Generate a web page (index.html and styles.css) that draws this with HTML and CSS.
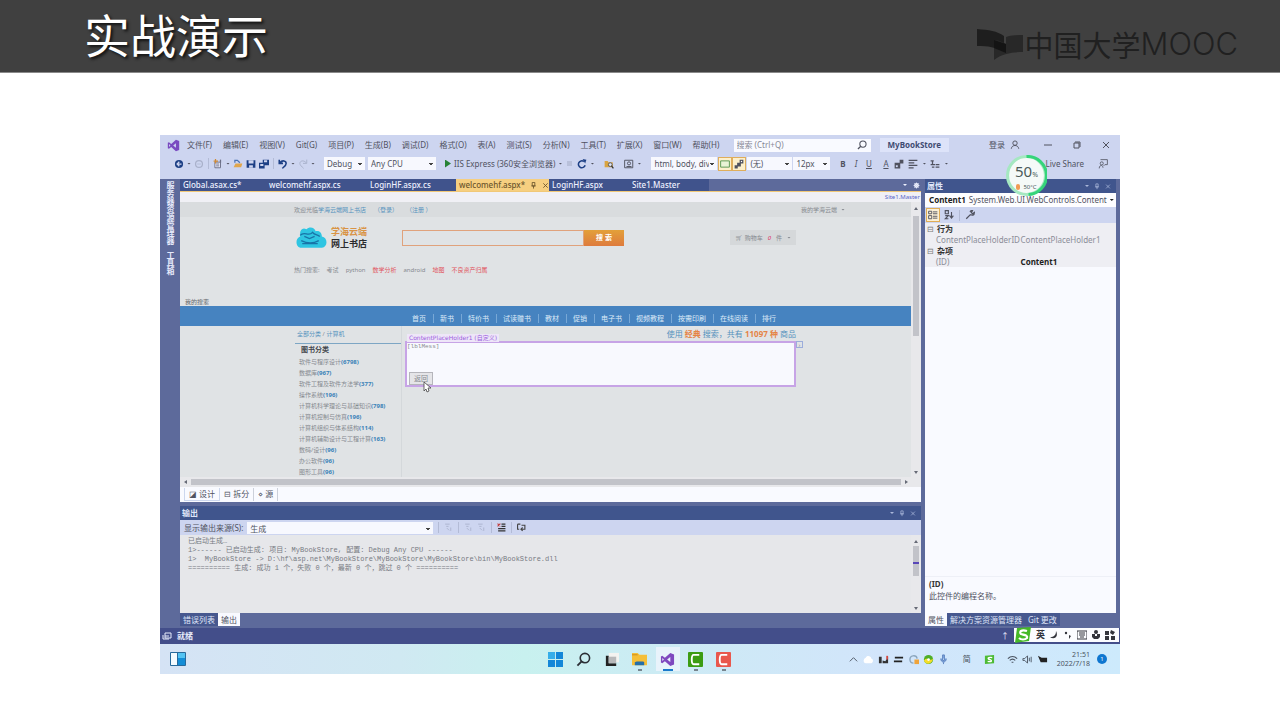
FILE: index.html
```html
<!DOCTYPE html>
<html lang="zh-CN">
<head>
    <meta charset="UTF-8">
    <meta name="viewport" content="width=device-width, initial-scale=1.0">
    <title>实战演示</title>
    <link rel="stylesheet" href="styles.css">
</head>
<body>
    <!-- ICON SHAPES -->
    <svg class="defs" aria-hidden="true">
        <symbol id="vs" viewBox="0 0 16 16"><path fill-rule="evenodd" d="M11 1l4 1.6v10.8L11 15 5.200 9.800 2.400 12 1 11.300V4.700L2.400 4l2.800 2.200zM11 5.300L7.600 8 11 10.700zM2.500 6.300v3.400L4.200 8z"/></symbol>
        <symbol id="search" viewBox="0 0 16 16"><circle cx="9.500" cy="6.500" r="5" fill="none" stroke="currentColor" stroke-width="1.700"/><path d="M6 10l-4.500 4.500" stroke="currentColor" stroke-width="2"/></symbol>
        <symbol id="back" viewBox="0 0 16 16"><circle cx="8" cy="8" r="6.500"/><path d="M8.500 4.500L5 8l3.500 3.500M5 8h7" fill="none" stroke="#cdd5f0" stroke-width="2"/></symbol>
        <symbol id="ring" viewBox="0 0 16 16"><circle cx="8" cy="8" r="5.500" fill="none" stroke="currentColor" stroke-width="2"/><path d="M5 8h6" stroke="currentColor"/></symbol>
        <symbol id="new" viewBox="0 0 16 16"><path d="M3 5h9v9H3zM5 8h5M5 11h5" fill="#eef" stroke="#6b6f86" stroke-width="1.500"/><path d="M4 0v7M1 3.500h7" stroke="#d08a35" stroke-width="2"/><path d="M12 1v5" stroke="#6b6f86" stroke-width="2"/></symbol>
        <symbol id="open" viewBox="0 0 16 16"><path d="M1 13l3-6h11l-2 6z" fill="#e0a64c"/><path d="M3 6V2h4l4 4" fill="none" stroke="#4a73b5" stroke-width="2"/></symbol>
        <symbol id="save" viewBox="0 0 16 16"><path d="M1 2h14v12H1z"/><path d="M4 2h8v5H4zM5 10h6v4H5z" fill="#cdd5f0"/></symbol>
        <symbol id="saveall" viewBox="0 0 16 16"><path d="M6 1h10v9H6zM0 6h9v9H0z"/><path d="M8 2h5v3H8zM2 8h5v3H2z" fill="#cdd5f0"/></symbol>
        <symbol id="undo" viewBox="0 0 16 16"><path d="M2 1v6h6M3 6c4-5 10-3 10 1 0 3-3 5-6 8" fill="none" stroke="currentColor" stroke-width="2.500"/></symbol>
        <symbol id="redo" viewBox="0 0 16 16"><path d="M14 1v6H8M13 6C9 1 3 3 3 7c0 3 3 5 6 8" fill="none" stroke="currentColor" stroke-width="1.500"/></symbol>
        <symbol id="refresh" viewBox="0 0 16 16"><path d="M13 10a5.500 5.500 0 1 1-2-6" fill="none" stroke="currentColor" stroke-width="2.500"/><path d="M9 0l6 1-2 6z"/></symbol>
        <symbol id="find" viewBox="0 0 16 16"><path d="M1 3h5l1 2h7v8H1z" fill="#d9a441"/><circle cx="10" cy="9" r="3" fill="#dfe4f6" stroke="#555" stroke-width="1.500"/><path d="M12 11l3 4" stroke="#333" stroke-width="2"/></symbol>
        <symbol id="preview" viewBox="0 0 16 16"><path d="M1 2h13v12H1zM4 12h8" fill="none" stroke="currentColor" stroke-width="1.500"/><circle cx="8" cy="7" r="2.500" fill="none" stroke="currentColor" stroke-width="1.500"/></symbol>
        <symbol id="box" viewBox="0 0 16 16"><path d="M1 3h14v10H1z" fill="#e9f3d5" stroke="#5a9650" stroke-width="1.500"/></symbol>
        <symbol id="link" viewBox="0 0 16 16"><path d="M9 1h6v6H9zM5 6h6v6H5zM1 10h5v5H1z"/><path d="M11 3h2v2h-2z" fill="#fff"/></symbol>
        <symbol id="blocks" viewBox="0 0 16 16"><path d="M1 6h9v9H1zM9 1h6v6H9z"/><path d="M3 10h3v3H3z" fill="#cdd5f0"/></symbol>
        <symbol id="lines" viewBox="0 0 16 16"><path d="M1 2h14M1 6h9M1 10h14M1 14h8" stroke="currentColor" stroke-width="2"/></symbol>
        <symbol id="clear" viewBox="0 0 16 16"><path d="M8 2h7M8 6h7M2 10h13M2 14h13" stroke="#333" stroke-width="2"/><path d="M1 1l5 5M6 1L1 6" stroke="#c23b3b" stroke-width="2"/></symbol>
        <symbol id="wrap" viewBox="0 0 16 16"><path d="M1 2h5M1 2v9h3M8 4h6v7H7M10 8l-3 3 3 3" fill="none" stroke="#444" stroke-width="2"/></symbol>
        <symbol id="list" viewBox="0 0 16 16"><path d="M1 3h5M4 3v6M1 9h7M9 9h6M9 13h6M3 13h4" stroke="currentColor" stroke-width="2"/></symbol>
        <symbol id="person" viewBox="0 0 16 16"><circle cx="8" cy="5" r="3.500" fill="none" stroke="currentColor" stroke-width="1.500"/><path d="M2 14c1-7 11-7 12 0" fill="none" stroke="currentColor" stroke-width="1.500"/></symbol>
        <symbol id="share" viewBox="0 0 16 16"><path d="M4 1h11v8h-4l-2 2M2 15c0-6 6-6 6-1" fill="none" stroke="currentColor" stroke-width="1.300"/><circle cx="6" cy="7" r="2.500" fill="none" stroke="currentColor" stroke-width="1.300"/></symbol>
        <symbol id="pin" viewBox="0 0 16 16"><path d="M5 1h6v8H5zM3 9h10M8 9v6" fill="none" stroke="currentColor" stroke-width="2"/></symbol>
        <symbol id="cross" viewBox="0 0 16 16"><path d="M3 3l10 10M13 3L3 13" stroke="currentColor" stroke-width="2"/></symbol>
        <symbol id="gear" viewBox="0 0 16 16"><circle cx="8" cy="8" r="4" fill="none" stroke="currentColor" stroke-width="3"/><path d="M8 1v14M1 8h14M3 3l10 10M13 3L3 13" stroke="currentColor" stroke-width="1.500"/></symbol>
        <symbol id="category" viewBox="0 0 16 16"><path d="M1 2h5v4H1zM1 9h5v5H1zM8 3h7M8 6h7M8 10h7M8 13h7" fill="none" stroke="currentColor" stroke-width="1.500"/></symbol>
        <symbol id="sort" viewBox="0 0 16 16"><path d="M2 1h5v5H2zM2 9h5l-5 5h5M12 3v9M9 9l3 4 3-4" fill="none" stroke="currentColor" stroke-width="1.800"/></symbol>
        <symbol id="wrench" viewBox="0 0 16 16"><path d="M2 14l7-7M8 3c2-3 4-2 4-2L10 4l2 2 3-2c0 5-4 5-6 3" fill="none" stroke="currentColor" stroke-width="2"/></symbol>
        <symbol id="step" viewBox="0 0 16 16"><path d="M2 2h8M4 6h4M5 9l4 4M12 8v6" stroke="currentColor" stroke-width="1.500"/></symbol>
    </svg>

    <!-- SLIDE HEADER -->
    <header class="slide-head">
        <h1>实战演示</h1>
        <div class="brand">
            <svg viewBox="0 0 48 32" width="48" height="32"><path d="M1 1c12 1 20 2 27 7v16C20 19 12 18 1 18z" fill="#1e1e1e"/><path d="M30 9c6-2 11-2 17-2v17c-8 0-21 1-29 8V12c5 0 8 2 12 4z" fill="#282828"/><path d="M18 12l12 4v9l-12-5z" fill="#141414"/></svg>
            <span class="brand-cn">中国大学</span><span class="brand-en">MOOC</span>
        </div>
    </header>

    <!-- RECORDED DESKTOP -->
    <main class="desktop">
        <div class="menubar">
            <svg class="vs-logo"><use href="#vs"/></svg>
            <nav class="menus"><span>文件(F)</span><span>编辑(E)</span><span>视图(V)</span><span>Git(G)</span><span>项目(P)</span><span>生成(B)</span><span>调试(D)</span><span>格式(O)</span><span>表(A)</span><span>测试(S)</span><span>分析(N)</span><span>工具(T)</span><span>扩展(X)</span><span>窗口(W)</span><span>帮助(H)</span></nav>
            <label class="finder"><input type="text" placeholder="搜索 (Ctrl+Q)" aria-label="搜索"><svg class="ic"><use href="#search"/></svg></label>
            <strong class="solution">MyBookStore</strong>
            <span class="login">登录 <svg class="ic"><use href="#person"/></svg></span>
            <div class="win"><button aria-label="最小化"><svg viewBox="0 0 8 8"><path d="M0 4h8" stroke="currentColor"/></svg></button><button aria-label="还原"><svg viewBox="0 0 8 8"><path d="M1 2h5v5H1zM2 1h5v5" fill="none" stroke="currentColor"/></svg></button><button aria-label="关闭"><svg viewBox="0 0 8 8"><path d="M1 1l6 6M7 1L1 7" stroke="currentColor"/></svg></button></div>
        </div>

        <div class="toolbar">
            <div class="tools files">
                <svg class="ic navy"><use href="#back"/></svg><i class="caret"></i><svg class="ic faint"><use href="#ring"/></svg><i class="sep"></i>
                <svg class="ic"><use href="#new"/></svg><i class="caret"></i><svg class="ic"><use href="#open"/></svg><svg class="ic navy"><use href="#save"/></svg><svg class="ic navy"><use href="#saveall"/></svg><i class="sep"></i>
                <svg class="ic navy"><use href="#undo"/></svg><i class="caret"></i><svg class="ic faint"><use href="#redo"/></svg><i class="caret"></i>
            </div>
            <div class="tools run">
                <select class="w-config" aria-label="配置"><option>Debug</option></select>
                <select class="w-cpu" aria-label="平台"><option>Any CPU</option></select>
                <button class="play"><i></i>IIS Express (360安全浏览器)</button><i class="caret"></i>
            </div>
            <div class="tools misc">
                <i class="dot"></i><svg class="ic navy"><use href="#refresh"/></svg><i class="caret"></i>
                <svg class="ic folder"><use href="#find"/></svg><svg class="ic"><use href="#preview"/></svg><i class="caret"></i>
            </div>
            <div class="tools style">
                <select class="w-rule" aria-label="目标规则"><option>html, body, div</option></select>
                <div class="toggles"><button aria-label="边框"><svg class="ic"><use href="#box"/></svg></button><button aria-label="重用"><svg class="ic"><use href="#link"/></svg></button></div>
                <select class="w-font" aria-label="字体"><option>(无)</option></select>
                <select class="w-size" aria-label="字号"><option>12px</option></select>
            </div>
            <div class="tools format">
                <b>B</b><em>I</em><u>U</u><u class="color-a">A</u><svg class="ic"><use href="#blocks"/></svg><svg class="ic"><use href="#lines"/></svg><i class="caret"></i><svg class="ic"><use href="#list"/></svg><i class="caret"></i>
            </div>
            <span class="live">Live Share <svg class="ic"><use href="#share"/></svg></span>
        </div>

        <div class="workspace">
            <aside class="rail"><span>服务器资源管理器</span><span>工具箱</span></aside>

            <div class="center">
                <!-- DOCUMENT TABS -->
                <div class="doc-tabs">
                    <span>Global.asax.cs*</span><span>welcomehf.aspx.cs</span><span>LoginHF.aspx.cs</span><span class="active">welcomehf.aspx* <svg><use href="#pin"/></svg><svg><use href="#cross"/></svg></span><span>LoginHF.aspx</span><span>Site1.Master</span>
                    <div class="doc-end"><i class="caret"></i><svg><use href="#gear"/></svg></div>
                </div>
                <div class="master-line"><a href="#">Site1.Master</a></div>

                <!-- DESIGN SURFACE -->
                <div class="surface">
                    <div class="page">
                        <div class="topline inner">
                            <span>欢迎光临<a href="#">学海云端网上书店</a></span><a href="#">（登录）</a><a href="#">（注册 ）</a>
                            <span class="mine">我的学海云端 <i class="caret"></i></span>
                        </div>
                        <div class="shop inner">
                            <svg class="cloud" viewBox="0 0 32 22"><path d="M6 21a6 6 0 0 1 0-11C5 4 8 1 12 3c3-3 8-2 9 2 4-1 6 2 6 5 6 1 6 10 0 11z" fill="#2fc5e2"/><path d="M6 9c4-5 8 2 12-3 2 3 5 2 7 4M7 14c4 2 10 4 17 0M8 17h15M10 10l5 2 5-2" fill="none" stroke="#1874a8" stroke-width="1.300"/></svg>
                            <div class="shop-name"><b>学海云端</b><strong>网上书店</strong></div>
                            <div class="shop-search"><input type="text" aria-label="图书搜索"><button>搜 索</button></div>
                            <button class="cart">🛒︎ 购物车 <em>0</em> 件 <i class="caret"></i></button>
                        </div>
                        <div class="hot inner"><span>热门搜索:</span><span>考试</span><span>python</span><a href="#">数学分析</a><span>android</span><a href="#">地图</a><a href="#">不良资产归属</a></div>
                        <div class="my-search">我的搜索</div>
                        <nav class="shop-nav"><a href="#">首页</a><a href="#">新书</a><a href="#">特价书</a><a href="#">试读赠书</a><a href="#">教材</a><a href="#">促销</a><a href="#">电子书</a><a href="#">视频教程</a><a href="#">按需印刷</a><a href="#">在线阅读</a><a href="#">排行</a></nav>
                        <div class="columns inner">
                            <div class="cats">
                                <div class="crumbs"><a href="#">全部分类</a> / <a href="#">计算机</a></div>
                                <h2>图书分类</h2>
                                <ul>
                                    <li>软件与程序设计<a href="#">(6798)</a></li>
                                    <li>数据库<a href="#">(967)</a></li>
                                    <li>软件工程及软件方法学<a href="#">(377)</a></li>
                                    <li>操作系统<a href="#">(196)</a></li>
                                    <li>计算机科学理论与基础知识<a href="#">(798)</a></li>
                                    <li>计算机控制与仿真<a href="#">(196)</a></li>
                                    <li>计算机组织与体系结构<a href="#">(114)</a></li>
                                    <li>计算机辅助设计与工程计算<a href="#">(163)</a></li>
                                    <li>数码/设计<a href="#">(96)</a></li>
                                    <li>办公软件<a href="#">(96)</a></li>
                                    <li>图形工具<a href="#">(96)</a></li>
                                </ul>
                            </div>
                            <div class="result">
                                <p>使用 <b>经典</b> 搜索，共有 <b>11097 种</b> 商品</p>
                                <div class="holder">
                                    <span class="holder-tag">ContentPlaceHolder1 (自定义)</span>
                                    <span class="mess">[lblMess]</span>
                                    <button class="return">返回</button>
                                    <button class="smart" aria-label="任务">›</button>
                                    <svg class="cursor" viewBox="0 0 8 12"><path d="M1 1v9l2-2 1 3 2-1-1-3h3z" fill="#fff" stroke="#444" stroke-width="0.800"/></svg>
                                </div>
                            </div>
                        </div>
                    </div>
                    <div class="vbar"><i class="up"></i><span></span><i class="down"></i></div>
                </div>
                <div class="hbar"><i class="left"></i><span></span><i class="right"></i></div>
                <div class="views"><span class="on">◪ 设计</span><span>⊟ 拆分</span><span class="last">⋄ 源</span></div>

                <!-- OUTPUT PANE -->
                <section class="output">
                    <div class="pane-head"><b>输出</b><div><i class="caret"></i><svg><use href="#pin"/></svg><svg><use href="#cross"/></svg></div></div>
                    <div class="out-tools">
                        <label for="source">显示输出来源(S):</label>
                        <select id="source"><option>生成</option></select>
                        <i class="sep"></i><svg class="ic faint"><use href="#step"/></svg><i class="sep"></i><svg class="ic faint"><use href="#step"/></svg><svg class="ic faint"><use href="#step"/></svg><i class="sep"></i><svg class="ic"><use href="#clear"/></svg><i class="sep"></i><svg class="ic"><use href="#wrap"/></svg>
                    </div>
                    <div class="log">
<pre>已启动生成…
1&gt;------ 已启动生成: 项目: MyBookStore, 配置: Debug Any CPU ------
1&gt;  MyBookStore -&gt; D:\hf\asp.net\MyBookStore\MyBookStore\MyBookStore\bin\MyBookStore.dll
========== 生成: 成功 1 个，失败 0 个，最新 0 个，跳过 0 个 ==========</pre>
                        <div class="vbar log-bar"><i class="up"></i><span></span><i class="down"></i></div>
                    </div>
                    <div class="pane-tabs"><span>错误列表</span><span class="on">输出</span></div>
                </section>
            </div>

            <!-- PROPERTIES PANE -->
            <section class="props">
                <div class="pane-head"><b>属性</b><div><i class="caret"></i><svg><use href="#pin"/></svg><svg><use href="#cross"/></svg></div></div>
                <div class="object"><b>Content1</b><span>System.Web.UI.WebControls.Content</span><i class="caret"></i></div>
                <div class="prop-tools"><button class="on" aria-label="按分类"><svg class="ic"><use href="#category"/></svg></button><svg class="ic"><use href="#sort"/></svg><i class="sep"></i><svg class="ic"><use href="#wrench"/></svg></div>
                <table>
                    <tr class="group"><th colspan="2"><i>⊟</i>行为</th></tr>
                    <tr class="off"><td>ContentPlaceHolderID</td><td>ContentPlaceHolder1</td></tr>
                    <tr class="group"><th colspan="2"><i>⊟</i>杂项</th></tr>
                    <tr><td>(ID)</td><td><b>Content1</b></td></tr>
                </table>
                <div class="hint"><b>(ID)</b><span>此控件的编程名称。</span></div>
                <div class="pane-tabs"><span class="on">属性</span><span>解决方案资源管理器</span><span>Git 更改</span></div>
            </section>
        </div>

        <div class="status">
            <svg viewBox="0 0 10 8"><path d="M3 1h6v5H3zM1 3v4h6M3 4h4" fill="none" stroke="currentColor"/></svg><b>就绪</b><span>↑</span>
            <div class="ime">
                <svg class="sogou" viewBox="0 0 18 16"><path d="M3 1l14-1-2 14-14 2z" fill="#46b928"/><path d="M13 4C7 2 5 5 7 7c3 1 7 1 6 4-2 2-6 2-8 0" fill="none" stroke="#fff" stroke-width="2.200"/></svg>
                <b>英</b>
                <svg viewBox="0 0 10 10"><path d="M7 1c3 6-2 9-6 6 4 0 6-2 6-6z"/></svg>
                <svg viewBox="0 0 10 10"><circle cx="3" cy="3" r="1.200"/><path d="M6 5l2 1-2 3z"/></svg>
                <svg viewBox="0 0 10 10"><path d="M0 1h10v8H0zM2 3h6M2 5h6M3 7h4" fill="none" stroke="currentColor"/></svg>
                <svg viewBox="0 0 10 10"><circle cx="5" cy="2" r="2"/><path d="M1 4h3v2h2V4h3v3L7 9H3L1 7z"/></svg>
                <svg viewBox="0 0 10 10"><path d="M0 1h4v4H0zM6 0l4 2-2 3-3-2zM0 6h4v4H0zM6 6h4v4H6z"/></svg>
            </div>
        </div>

        <!-- TASKBAR -->
        <footer class="taskbar">
            <svg class="widgets" viewBox="0 0 16 14"><rect width="16" height="14" rx="1" fill="#276a9c"/><path d="M1 1h6v12H1z" fill="#f4fbff"/><path d="M8 1h7v5H8z" fill="#54c3f2"/><path d="M8 6h7v7H8z" fill="#148dd6"/></svg>
            <div class="apps">
                <span><svg viewBox="0 0 16 16"><path d="M0 0h7.500v7.500H0zM8.500 0H16v7.500H8.500zM0 8.500h7.500V16H0zM8.500 8.500H16V16H8.500z" fill="#1387d8"/><path d="M0 0h7.500v7.500H0z" fill="#36aee9"/></svg></span>
                <span><svg><use href="#search"/></svg></span>
                <span><svg viewBox="0 0 16 16"><path d="M5 1h11v10H5z" fill="#f3f3f0"/><path d="M2 4h3v8h8v3H2z" fill="#222"/><path d="M5 5h8v7H5z" fill="#b8b9ba"/></svg></span>
                <span class="open"><svg viewBox="0 0 16 16"><path d="M0 1h6l2 2h8v11H0z" fill="#f5bf38"/><path d="M0 3h6" stroke="#c98a1c"/><path d="M3 14v-3l2-1h7l1 1v3z" fill="#256fa8"/></svg></span>
                <span class="open now"><svg class="violet"><use href="#vs"/></svg></span>
                <span class="open"><svg viewBox="0 0 16 16"><rect width="16" height="16" rx="1" fill="#3c9c12"/><path d="M12 3H6c-2 0-2 2-2 5s0 5 2 5h6" fill="none" stroke="#fff" stroke-width="2"/></svg></span>
                <span class="open"><svg viewBox="0 0 16 16"><rect width="16" height="16" rx="1" fill="#e9584d"/><path d="M12 3H6c-2 0-2 2-2 5s0 5 2 5h6" fill="none" stroke="#fff" stroke-width="2"/></svg></span>
            </div>
            <div class="tray">
                <svg viewBox="0 0 12 12"><path d="M2 8l4-4 4 4" fill="none" stroke="currentColor"/></svg>
                <svg viewBox="0 0 12 12"><path d="M3 4c1-3 6-2 6 1 3 1 2 5 0 5H3C0 10 0 5 3 4z" fill="#fff"/></svg>
                <svg viewBox="0 0 12 12"><path d="M1 3h3v7H1zM5 7l3 1 3-5v7H5z" fill="#333"/><path d="M9 2h2v4H9z" fill="#d34840"/></svg>
                <svg viewBox="0 0 12 12"><path d="M2 4h9M1 8h9" stroke="#222" stroke-width="2"/></svg>
                <svg viewBox="0 0 12 12"><path d="M10 5a4 4 0 1 0-4 5" fill="none" stroke="#8ba6bd" stroke-width="1.500"/><path d="M7 6h5v5H7z" fill="#efa43b"/></svg>
                <svg viewBox="0 0 12 12"><circle cx="6" cy="6" r="5" fill="#4eae27"/><path d="M1 7c4-5 6 2 10-2-1 7-8 7-10 2z" fill="#f5dd2a"/><circle cx="6" cy="6" r="1.500" fill="#fff"/></svg>
                <svg viewBox="0 0 12 12"><path d="M5 1h2v6H5zM3 5c0 5 6 5 6 0M6 9v2" fill="#82a9df" stroke="#5a80bd"/></svg>
                <span class="cn">简</span>
                <svg viewBox="0 0 12 12"><path d="M1 2l10-1v9L1 11z" fill="#4dbb35"/><path d="M9 4c-4-1-6 1-3 2s3 3-2 2" fill="none" stroke="#fff" stroke-width="1.500"/></svg>
                <svg class="wifi" viewBox="0 0 12 12"><path d="M1 5c3-3 7-3 10 0M3 7c2-2 4-2 6 0M5 9h2" fill="none" stroke="currentColor" stroke-width="1.300"/></svg>
                <svg viewBox="0 0 12 12"><path d="M1 5h2l3-3v8L3 7H1zM8 4v4M10 3v6" fill="none" stroke="currentColor"/></svg>
                <svg viewBox="0 0 12 12"><path d="M1 2l4 2h6v5H4z" fill="#222"/></svg>
                <div class="clock"><span>21:51</span><span>2022/7/18</span></div>
                <span class="note">1</span>
            </div>
        </footer>

        <div class="meter">
            <svg viewBox="0 0 40 40"><circle cx="20" cy="20" r="18.500" fill="#f5faf8" stroke="#a5e8c1" stroke-width="3"/><path d="M20 1.500a18.500 18.500 0 0 1 2 37" fill="none" stroke="#35d47a" stroke-width="3"/></svg>
            <div class="meter-text"><span>50<small>%</small></span><span class="temp"><i></i>50°C</span></div>
        </div>
    </main>
</body>
</html>
```
FILE: styles.css
```css
*{box-sizing: border-box;}
body{
    margin: 0;
    background: #fff;
    color: #50525f;
    font-family: "Noto Sans", "Noto Sans CJK SC", sans-serif;
    font-size: 8px;
    line-height: 10px;
    white-space: nowrap;
}
button, input, select{
    font: inherit;
    color: inherit;
    margin: 0;
    padding: 0;
    border: 0;
    border-radius: 0;
    background: none;
}
a{color: #5592bd; text-decoration: none;}
svg{fill: currentColor; flex: none;}
.defs{display: none;}

/* slide header */
.slide-head{
    display: flex;
    justify-content: space-between;
    align-items: flex-start;
    height: 73px;
    padding: 0 42px 0 84px;
    background: #404040;
    border-bottom: 1px solid #8a8a8a;
}
.slide-head h1{
    margin: 0;
    color: #fff;
    font-family: "Noto Sans CJK SC", sans-serif;
    font-size: 46px;
    font-weight: 400;
    line-height: 66px;
    text-shadow: 2px 2px 3px #111;
}
.brand{display: flex; align-items: center; padding-top: 28px; color: #202020;}
.brand-cn{font-family: "Noto Sans CJK SC", sans-serif; font-size: 29px; line-height: 32px;}
.brand-en{font-family: Inter, sans-serif; font-size: 31px; font-weight: 300; line-height: 32px;}

/* desktop */
.desktop{
    position: relative;
    width: 75%;
    margin: 62px auto 0;
    background: #cdd5f0;
}
.ic{width: 10px; height: 10px;}
.navy{color: #1c3f85;}
.faint{color: #a9b1cb;}
.caret{
    flex: none;
    width: 4px;
    height: 2px;
    background: currentColor;
    clip-path: polygon(0 0, 100% 0, 50% 100%);
}
.sep{flex: none; width: 1px; height: 11px; margin: 0 1px; background: #b3bbd6;}
select{
    appearance: none;
    height: 13px;
    padding: 0 8px 0 3px;
    line-height: 13px;
    background-color: #f7f8fe;
    background-image: linear-gradient(#444, #444), linear-gradient(#444, #444);
    background-position: right 3px top 6px, right 4px top 7px;
    background-size: 4px 1px, 2px 1px;
    background-repeat: no-repeat;
}

.menubar{display: flex; align-items: center; height: 20px; padding: 0 10px 0 7px;}
.vs-logo{width: 13px; height: 13px; color: #7a4ac0;}
.menus{display: flex; gap: 11px; margin-left: 7px;}
.finder{
    display: flex;
    align-items: center;
    width: 137px;
    height: 13px;
    margin-left: auto;
    padding: 0 4px 0 3px;
    background: #f9faff;
}
.finder input{flex: 1; min-width: 0;}
.finder input::placeholder{color: #868896;}
.solution{margin-left: 9px; padding: 2px 8px; background: #dde3f9; color: #3f4b72;}
.login{display: flex; gap: 5px; align-items: center; margin-left: 40px;}
.win{display: flex; gap: 21px; margin-left: 24px;}
.win button{width: 8px; height: 8px; display: flex;}
.win svg{width: 8px; height: 8px;}

.toolbar{display: flex; align-items: center; height: 24px; padding: 0 12px 7px 14px;}
.tools{display: flex; align-items: center; gap: 3px;}
.run{margin-left: 9px;}
.w-config{width: 41px;}
.w-cpu{width: 68px;}
.w-rule{width: 66px;}
.w-font{width: 45px;}
.w-size{width: 37px;}
.play{display: flex; align-items: center; gap: 3px; margin-left: 6px;}
.play i{width: 6px; height: 8px; background: #268235; clip-path: polygon(0 0, 100% 50%, 0 100%);}
.misc{margin-left: 5px;}
.dot{width: 5px; height: 5px; margin-right: 2px; background: #b8c0da;}
.misc .folder, .misc .folder + .ic{margin-left: 7px;}
.style{gap: 1px; margin-left: 10px;}
.toggles{display: flex;}
.toggles button{display: flex; padding: 1px; border: 1px solid #dfae5c; background: #fdf0cb;}
.format{gap: 4px; margin-left: 8px;}
.format b, .format em, .format u{width: 9px; text-align: center;}
.format .color-a{margin-left: 4px;}
.live{display: flex; align-items: center; gap: 14px; margin-left: auto;}

/* workspace */
.workspace{
    display: grid;
    grid-template-columns: 20px minmax(0, 1fr) 191px;
    padding: 0 4px 2px 0;
    background: #5d6a9b;
}
.rail{
    display: flex;
    flex-direction: column;
    align-items: center;
    gap: 6px;
    padding-top: 2px;
    color: #e5e9fa;
    font-weight: 700;
}
.rail span{writing-mode: vertical-rl;}
.center{margin-right: 4px;}
.doc-tabs{display: flex; height: 13px; border-bottom: 1px solid #f1c877; color: #eef1ff;}
.doc-tabs > span{
    display: flex;
    align-items: center;
    width: 84px;
    padding-left: 3px;
    background: #40538c;
    font-weight: 500;
}
.doc-tabs > span:nth-child(2){width: 101px; padding-left: 5px;}
.doc-tabs > span:nth-child(3){width: 91px; padding-left: 5px;}
.doc-tabs > .active{width: 93px; gap: 5px; background: #f6cf80; color: #6d562d;}
.doc-tabs > .active ~ span{width: 80px;}
.doc-tabs svg{width: 7px; height: 7px;}
.doc-end{display: flex; align-items: center; gap: 6px; margin-left: auto; padding-right: 1px;}
.master-line{height: 10px; padding-right: 1px; background: #f0f0f5; text-align: right; font-size: 6px; line-height: 10px;}
.master-line a{color: #5865c8;}

.surface{display: flex; background: #e0e3e5; color: #868a90; font-size: 6px; line-height: 8px;}
.page{flex: 1; min-width: 0;}
.inner{padding-left: 114px; padding-right: 115px;}
.topline{display: flex; align-items: center; gap: 8px; height: 15px; padding-right: 66px; background: #d9dcde;}
.mine{display: flex; align-items: center; gap: 4px; margin-left: auto;}
.shop{display: flex; align-items: center; height: 41px;}
.cloud{width: 33px; height: 23px;}
.shop-name{display: flex; flex-direction: column; margin-left: 4px; font-size: 9px; line-height: 12px;}
.shop-name b{color: #d99445;}
.shop-name strong{color: #2b2c2e;}
.shop-search{display: flex; flex: 0 0 222px; height: 16px; margin-left: 35px;}
.shop-search input{flex: 1; min-width: 0; border: 1px solid #e0a27c;}
.shop-search button{width: 40px; background: linear-gradient(#e3a039, #de7b3d); color: #fff; font-size: 7px; font-weight: 700;}
.cart{display: flex; align-items: center; gap: 5px; height: 15px; margin-left: auto; padding: 0 5px; background: #d5d8da;}
.cart em{color: #d36;}
.hot{display: flex; gap: 7px; padding-top: 8px;}
.hot a{color: #e05560;}
.my-search{padding: 24px 0 0 5px; color: #60646a;}
.shop-nav{
    display: flex;
    padding: 8px 0 3px 225px;
    background: #4683c0;
    font-size: 7px;
    line-height: 9px;
}
.shop-nav a{padding: 0 7px; color: #dceaf8;}
.shop-nav a + a{border-left: 1px solid #78a8d6; padding-left: 6px;}
.columns{display: flex; height: 151px; overflow: clip;}
.cats{flex: 0 0 107px; margin-left: 1px; padding-top: 4px; border-right: 1px solid #d4d8db;}
.crumbs{padding-left: 2px;}
.cats h2{
    margin: 5px 0 3px;
    padding: 2px 6px 0;
    border-top: 1px solid #7da6c4;
    color: #44484e;
    font-size: 7px;
    line-height: 8px;
}
.cats ul{margin: 0; padding: 0 0 0 4px; list-style: none; line-height: 11px;}
.cats li a{color: #3a82b8; font-weight: 700;}
.result{flex: 1; min-width: 0; padding: 3px 0 0 3px;}
.result p{margin: 0 0 2px; color: #5592bd; font-size: 8px; line-height: 10px; text-align: right;}
.result p b{color: #e58345;}
.holder{
    position: relative;
    display: flex;
    flex-direction: column;
    justify-content: space-between;
    align-items: flex-start;
    height: 46px;
    border: 2px solid #c7a4e6;
    background: #f8f9fe;
}
.holder-tag{
    position: absolute;
    top: -9px;
    left: 0;
    padding: 0 2px;
    background: #eee6f8;
    color: #9a60dd;
    font-family: "DejaVu Sans", "Noto Sans CJK SC", sans-serif;
    line-height: 8px;
}
.mess{font-family: "Liberation Mono", monospace; line-height: 7px;}
.return{margin-left: 2px; padding: 1px 4px; border: 1px solid #b5b5bb; background: #e5e5e8; font-size: 7px; line-height: 9px;}
.smart{position: absolute; right: -9px; top: -2px; width: 7px; height: 7px; border: 1px solid #9caddb; line-height: 4px;}
.cursor{position: absolute; left: 16px; top: 38px; width: 8px; height: 12px;}
.vbar{display: flex; flex: 0 0 10px; flex-direction: column; align-items: center; padding: 5px 0 3px; background: #e8e8eb;}
.vbar span{width: 6px; height: 120px; margin: 6px 0 auto; background: #c2c3c9;}
.up, .down{width: 4px; height: 3px; background: #666a76; clip-path: polygon(50% 0, 100% 100%, 0 100%);}
.down{transform: rotate(180deg);}
.hbar{display: flex; align-items: center; gap: 4px; height: 10px; padding: 0 13px 0 4px; background: #e8e8eb;}
.hbar span{flex: 1; height: 6px; background: #c2c3c9;}
.left, .right{width: 3px; height: 4px; background: #666a76; clip-path: polygon(0 50%, 100% 0, 100% 100%);}
.right{transform: rotate(180deg);}
.views{display: flex; height: 15px; padding: 1px 4px; background: #f9faff;}
.views span{padding: 1px 4px;}
.views .on{border: 1px solid #ccd7ee; border-top: 0;}
.views .last{border: solid #ccd0da; border-width: 0 1px;}

/* panes */
.pane-head{
    display: flex;
    justify-content: space-between;
    align-items: center;
    height: 14px;
    padding: 0 5px 0 2px;
    background: #40558d;
    color: #dfe5f8;
}
.pane-head div{display: flex; align-items: center; gap: 5px; color: #aab7da;}
.pane-head svg{width: 6px; height: 7px;}
.output{margin-top: 4px;}
.out-tools{display: flex; align-items: center; gap: 4px; height: 15px; padding-left: 4px; background: #cdd5f0;}
.out-tools select{width: 186px; height: 12px;}
.out-tools .ic{width: 9px; height: 9px;}
.log{display: flex; height: 78px; background: #e6e7ea;}
.log pre{
    flex: 1;
    min-width: 0;
    margin: 0;
    padding: 2px 8px;
    color: #777a82;
    font-family: "Liberation Mono", "Noto Sans CJK SC", monospace;
    font-size: 7px;
    line-height: 9px;
}
.log-bar span{height: 30px; margin-top: 3px; background: linear-gradient(#c2c3c9 16px, #5947b8 16px, #5947b8 18px, #c2c3c9 18px);}
.pane-tabs{display: flex; color: #dfe5f8; line-height: 13px;}
.pane-tabs span{padding: 0 3px; background: #47588f;}
.pane-tabs .on{background: #f9faff; color: #50525f;}

.props{display: flex; flex-direction: column; background: #f9faff;}
.object{display: flex; align-items: center; gap: 3px; height: 14px; padding: 0 3px 0 4px; background: #fdfdff;}
.object b{color: #222;}
.object .caret{margin-left: auto; color: #222;}
.prop-tools{display: flex; align-items: center; gap: 4px; height: 16px; padding-left: 1px; background: #cdd5f0;}
.prop-tools button{display: flex; padding: 1px; border: 1px solid #e0ad56; background: #fbf0d6;}
.props table{width: 100%; border-collapse: collapse; table-layout: fixed; background: #eeeef3;}
.props th, .props td{height: 11px; padding: 0; text-align: left; line-height: 11px;}
.props td:first-child{padding-left: 11px; color: #8b8d98;}
.props th{color: #333; padding-left: 2px;}
.props th i{margin-right: 3px; color: #777; font-style: normal; font-weight: 400;}
.props td:last-child b{color: #222;}
.off td{color: #8b8d98;}
.hint{display: flex; flex-direction: column; gap: 2px; margin-top: auto; padding: 2px 4px 12px; border-top: 1px solid #eef0f7;}
.hint b{color: #333;}
.props .pane-tabs{background: #5d6a9b;}

.status{position: relative; display: flex; align-items: center; gap: 5px; height: 16px; padding: 0 111px 0 2px; background: #434e8a; color: #e8ecfb;}
.status > svg{width: 10px; height: 8px;}
.status > span{margin-left: auto;}
.ime{
    position: absolute;
    right: 1px;
    bottom: 2px;
    display: flex;
    align-items: center;
    gap: 4px;
    height: 14px;
    padding: 0 4px 0 0;
    background: #fbfcff;
    color: #33343c;
    font-size: 9px;
}
.ime svg{width: 10px; height: 10px;}
.ime .sogou{width: 18px; height: 16px;}

.taskbar{
    display: grid;
    grid-template-columns: 1fr auto 1fr;
    align-items: center;
    height: 30px;
    padding: 0 11px 0 10px;
    background: linear-gradient(90deg, #d5e3f5, #d0e9f2 25%, #c8f1ef 38%, #cdeaf5 55%, #d2e5fb 75%, #cdeafc);
}
.widgets{width: 16px; height: 14px;}
.apps{display: flex; gap: 4px; color: #2b2f35;}
.apps span{position: relative; display: flex; justify-content: center; align-items: center; width: 24px; height: 24px;}
.apps svg{width: 15px; height: 15px;}
.apps .violet{color: #8048bf;}
.apps .open::after{content: ""; position: absolute; bottom: 0; width: 4px; height: 2px; background: #77858e;}
.apps .now{background: #e8f3fb;}
.apps .now::after{width: 10px; background: #1979cb;}
.tray{display: flex; align-items: center; justify-content: flex-end; gap: 4px; color: #4a5360;}
.tray svg{width: 11px; height: 11px;}
.cn{margin: 0 9px 0 10px;}
.tray .wifi{margin-left: 8px;}
.clock{display: flex; flex-direction: column; align-items: flex-end; margin-left: 5px; font-size: 7px; line-height: 9px;}
.note{width: 10px; height: 10px; margin: 0 2px 0 3px; border-radius: 50%; background: #0e76d0; color: #fff; font-size: 6px; text-align: center;}

/* cpu meter floating over the window */
.meter{position: absolute; right: 73px; top: 20px; width: 41px; height: 41px;}
.meter svg{width: 100%; height: 100%; display: block;}
.meter-text{position: absolute; inset: 9px 0 0; display: flex; flex-direction: column; align-items: center; gap: 2px; color: #4b5a58; font-size: 15px; line-height: 15px;}
.meter-text small{font-size: 7px;}
.meter-text .temp{display: flex; gap: 3px; font-size: 6px; line-height: 7px;}
.temp i{width: 4px; height: 6px; border-radius: 2px; background: #f09b54;}
```
